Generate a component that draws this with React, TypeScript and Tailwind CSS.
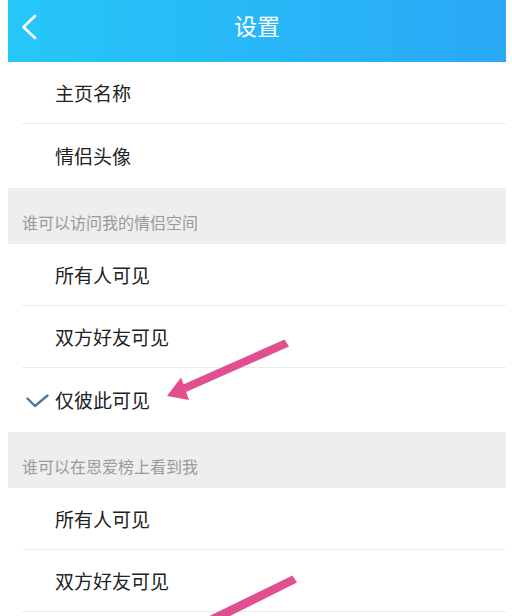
const font = { fontFamily: '"Noto Sans CJK SC", "Noto Sans", sans-serif' }

type RowProps = {
  label: string
  checked?: boolean
  last?: boolean
}

function Row({ label, checked, last }: RowProps) {
  return (
    <div className={`relative flex items-center bg-white ${last ? 'h-[64px]' : 'h-[62px]'}`}>
      {checked && (
        <svg className="absolute left-[18px] top-[26px]" width="24" height="16" viewBox="0 0 24 16">
          <path d="M1.5 4.5 L9 12 L21.5 1.5" fill="none" stroke="#4a79a2" strokeWidth="2.4" strokeLinecap="round" strokeLinejoin="round" />
        </svg>
      )}
      <span className="pl-[47px] text-[19px] text-[#222]">{label}</span>
      {!last && <div className="absolute bottom-0 left-[14px] right-0 h-px bg-[#ececec]" />}
    </div>
  )
}

function SectionTitle({ title }: { title: string }) {
  return (
    <div className="flex h-[56px] items-end bg-[#eeeeee] pb-[11px] pl-[14px]">
      <span className="text-[16px] leading-[22px] text-[#9a9a9a]">{title}</span>
    </div>
  )
}

export default function App() {
  return (
    <div className="relative h-[616px] w-[512px] overflow-hidden bg-white pl-[8px] pr-[6px]" style={font}>
      <div className="relative flex h-[62px] items-center justify-center bg-gradient-to-r from-[#26c7f8] to-[#2aa8f6] pb-[11px] shadow-[0_1px_1px_rgba(0,80,140,0.25)]">
        <svg className="absolute left-[12px] top-[14px]" width="18" height="26" viewBox="0 0 18 26">
          <path d="M15 2 L3.5 13 L15 24" fill="none" stroke="#ffffff" strokeWidth="2.6" strokeLinecap="round" strokeLinejoin="round" />
        </svg>
        <span className="text-[23px] text-white">设置</span>
      </div>

      <Row label="主页名称" />
      <Row label="情侣头像" last />

      <SectionTitle title="谁可以访问我的情侣空间" />
      <Row label="所有人可见" />
      <Row label="双方好友可见" />
      <Row label="仅彼此可见" checked last />

      <SectionTitle title="谁可以在恩爱榜上看到我" />
      <Row label="所有人可见" />
      <Row label="双方好友可见" />

      <svg className="pointer-events-none absolute left-0 top-0" width="512" height="616" viewBox="0 0 512 616">
        <g fill="#e0508f">
          <path d="M284.5 339.5 L289 346.5 L186 392 L182 385 Z" />
          <path d="M167 396 L181 377.5 L189 400 Z" />
          <path d="M292.5 575.5 L297 582.5 L202 630 L197 622 Z" />
        </g>
      </svg>
    </div>
  )
}
